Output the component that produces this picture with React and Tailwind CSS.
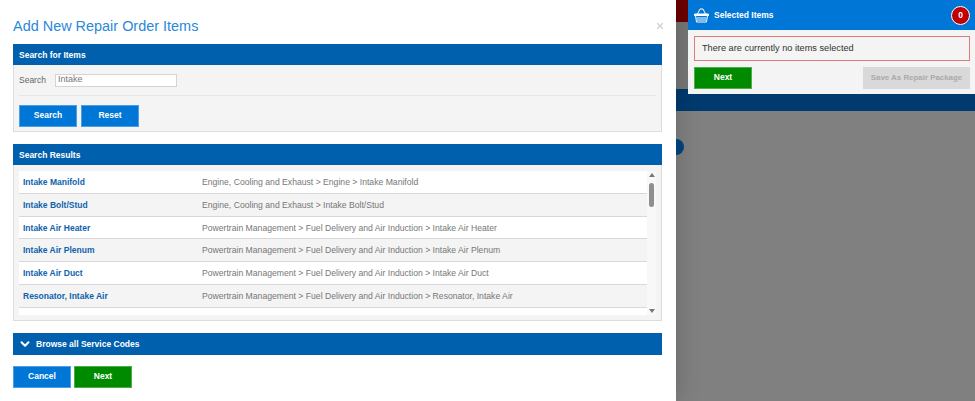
import { X, ChevronDown } from "lucide-react";

const results = [
  ["Intake Manifold", "Engine, Cooling and Exhaust > Engine > Intake Manifold"],
  ["Intake Bolt/Stud", "Engine, Cooling and Exhaust > Intake Bolt/Stud"],
  ["Intake Air Heater", "Powertrain Management > Fuel Delivery and Air Induction > Intake Air Heater"],
  ["Intake Air Plenum", "Powertrain Management > Fuel Delivery and Air Induction > Intake Air Plenum"],
  ["Intake Air Duct", "Powertrain Management > Fuel Delivery and Air Induction > Intake Air Duct"],
  ["Resonator, Intake Air", "Powertrain Management > Fuel Delivery and Air Induction > Resonator, Intake Air"],
];

const Btn = ({ children, className }) => (
  <button className={`h-[22px] w-[58px] pb-px text-[8.5px] font-bold text-white border border-white/30 ${className}`}>
    {children}
  </button>
);

const BasketIcon = () => (
  <svg width="15" height="15" viewBox="0 0 15 15" fill="none" stroke="white" strokeWidth="1">
    <path d="M3.5 6 L6 1 H9 L11.5 6" />
    <path d="M0.5 6 H14.5 V7.5 H0.5 Z" fill="white" />
    <path d="M1.5 7.5 L2.5 14 H12.5 L13.5 7.5" />
    <path d="M2.5 10 H12.5 M3 12 H12" />
  </svg>
);

export default function App() {
  return (
    <div className="relative flex h-[401px] w-[975px] overflow-hidden bg-[#808080] font-['Liberation_Sans',sans-serif]">
      {/* modal */}
      <div className="relative z-10 w-[676px] shrink-0 bg-white px-[13px] shadow-[0_0_24px_rgba(0,0,0,0.2)]">
        <div className="flex h-[44px] items-center justify-between pt-[9px]">
          <h1 className="text-[14.45px] text-[#2b88d8]">Add New Repair Order Items</h1>
          <X size={10} strokeWidth={3} className="-mr-[2px] -mt-[2px] text-[#d0d0d0]" />
        </div>

        <section className="h-[88px] w-[649px] border-r border-b border-l border-[#dddddd] bg-[#f4f4f4]">
          <div className="-mx-px flex h-[21px] items-center bg-[#0060ad] px-[6px] pt-px text-[8.5px] font-bold text-white">
            Search for Items
          </div>
          <div className="px-[5px]">
            <div className="flex h-[31px] items-center gap-[9px] border-b border-[#e6e6e6] text-[8.5px] text-[#666666]">
              <span>Search</span>
              <input
                readOnly
                value="Intake"
                className="h-[13px] w-[122px] border border-[#d4d4d4] bg-white px-[2px] text-[9px] text-[#777777] outline-none"
              />
            </div>
            <div className="flex gap-[4px] pt-[9px]">
              <Btn className="bg-[#0076d6]">Search</Btn>
              <Btn className="bg-[#0076d6]">Reset</Btn>
            </div>
          </div>
        </section>

        <section className="mt-[12px] h-[177px] w-[649px] border-r border-b border-l border-[#dddddd] bg-[#f4f4f4]">
          <div className="-mx-px flex h-[21px] items-center bg-[#0060ad] px-[6px] pt-px text-[8.5px] font-bold text-white">
            Search Results
          </div>
          <div className="mt-[6px] flex px-[5px]">
            <div className="h-[144px] flex-1 overflow-hidden bg-white">
              {results.map(([name, path], i) => (
                <div
                  key={name}
                  className={`flex h-[22.8px] items-center border-b border-[#d8d8d8] px-[4px] pt-px text-[8.65px] ${i % 2 ? "bg-[#f4f4f4]" : "bg-white"}`}
                >
                  <span className="w-[179px] text-[8.5px] font-bold text-[#0f62ac]">{name}</span>
                  <span className="text-[#777777]">{path}</span>
                </div>
              ))}
            </div>
            <div className="flex h-[144px] w-[9px] flex-col items-center justify-between bg-[#f8f8f8]">
              <span className="mt-[2px] h-0 w-0 border-x-[3px] border-b-[4px] border-x-transparent border-b-[#777777]" />
              <span className="absolute mt-[12px] h-[24px] w-[5px] rounded-full bg-[#8f8f8f]" />
              <span className="mb-[2px] h-0 w-0 border-x-[3px] border-t-[4px] border-x-transparent border-t-[#777777]" />
            </div>
          </div>
        </section>

        <div className="mt-[12px] flex h-[22px] w-[649px] items-center gap-[4px] bg-[#0060ad] px-[5px] text-[8.5px] font-bold text-white">
          <ChevronDown size={14} strokeWidth={3.5} />
          Browse all Service Codes
        </div>

        <div className="mt-[11px] flex gap-[3px]">
          <Btn className="bg-[#0076d6]">Cancel</Btn>
          <Btn className="bg-[#008a00]">Next</Btn>
        </div>
      </div>

      {/* page behind the modal */}
      <div className="flex-1">
        <div className="h-[22px] bg-[#6b0000]" />
        <div className="h-[67px] bg-[#777777]" />
        <div className="h-[22px] bg-[#003a6e]" />
      </div>
      <span className="absolute left-[668px] top-[139px] h-[16px] w-[16px] rounded-full bg-[#00457f]" />

      {/* selected items panel */}
      <aside className="absolute right-0 top-0 z-20 h-[94px] w-[287px] bg-[#f4f4f4]">
        <div className="flex h-[30px] items-center justify-between bg-[#0076d6] pl-[6px] pr-[5px]">
          <div className="flex items-center gap-[5px] text-[8.5px] font-bold text-white">
            <BasketIcon />
            Selected Items
          </div>
          <span className="flex h-[19px] w-[19px] items-center justify-center rounded-full border-[1.5px] border-white bg-[#c00000] text-[8.5px] font-bold text-white">
            0
          </span>
        </div>
        <div className="mx-[6px] mt-[6px] flex h-[25px] w-[276px] items-center border border-[#e07b7b] px-[7px] text-[9.2px] text-[#333333]">
          There are currently no items selected
        </div>
        <div className="mx-[6px] mt-[6px] flex w-[276px] justify-between">
          <Btn className="bg-[#008a00]">Next</Btn>
          <button className="h-[22px] w-[107px] bg-[#d9d9d9] text-[7.9px] font-bold text-[#aaaaaa]">
            Save As Repair Package
          </button>
        </div>
      </aside>
    </div>
  );
}
